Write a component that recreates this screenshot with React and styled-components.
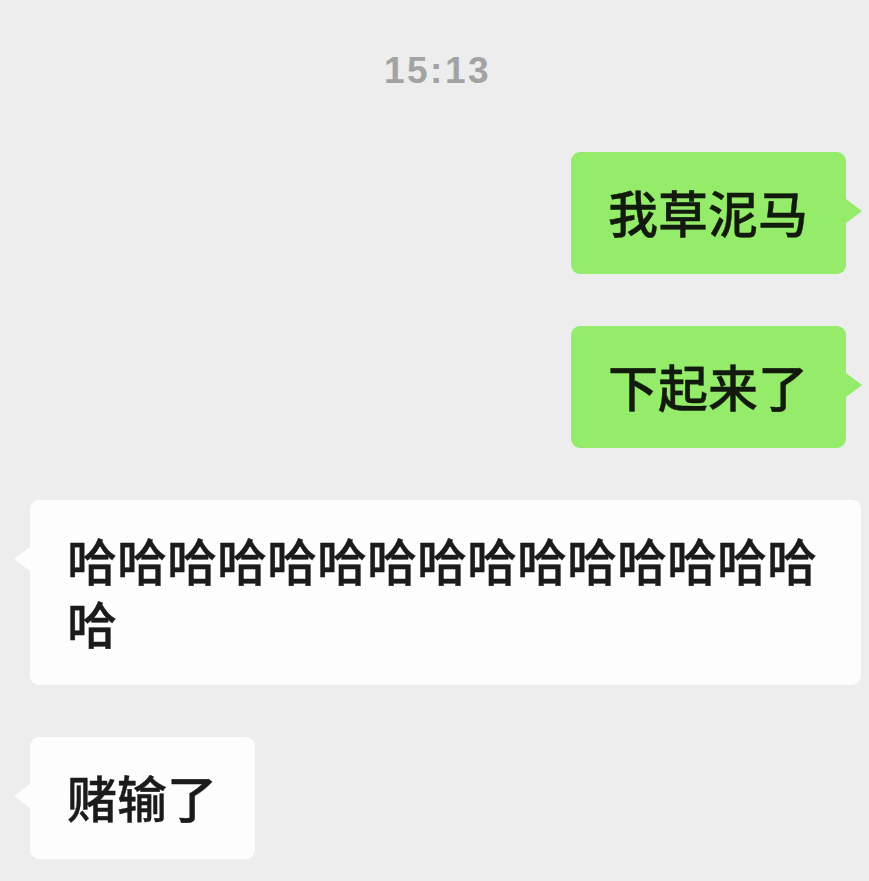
import React from "react";
import styled, { createGlobalStyle, css } from "styled-components";

const Global = createGlobalStyle`
  html, body { margin: 0; padding: 0; background: #ededed; }
  body { font-family: "Noto Sans CJK SC", "Noto Sans", sans-serif; }
`;

const Page = styled.div`
  width: 869px;
  min-height: 881px;
  background: #ededed;
  display: flex;
  flex-direction: column;
  gap: 52px;
  box-sizing: border-box;
  overflow: hidden;
`;

const Time = styled.div`
  margin-top: 51px;
  margin-bottom: 9px;
  height: 40px;
  line-height: 40px;
  text-align: center;
  padding-left: 6px;
  font-family: "Liberation Sans", Arial, sans-serif;
  font-weight: 700;
  font-size: 37px;
  letter-spacing: 2.5px;
  color: #a3a3a3;
`;

const Row = styled.div`
  display: flex;
  justify-content: ${(p) => (p.$side === "right" ? "flex-end" : "flex-start")};
  padding: ${(p) => (p.$side === "right" ? "0 23px 0 30px" : "0 8px 0 30px")};
`;

const Bubble = styled.div`
  position: relative;
  max-width: 100%;
  box-sizing: border-box;
  padding: 28px 38px 31px 37px;
  border-radius: 9px;
  font-size: 50px;
  line-height: 63px;
  font-weight: 500;
  -webkit-text-stroke: 0.4px currentColor;
  word-break: break-all;
  background: ${(p) => (p.$side === "right" ? "#95ec6a" : "#fdfdfd")};
  color: ${(p) => (p.$side === "right" ? "#111a0c" : "#1b1b1b")};

  &::after {
    content: "";
    position: absolute;
    top: 47px;
    width: 0;
    height: 0;
    border-top: 12px solid transparent;
    border-bottom: 12px solid transparent;
    ${(p) =>
      p.$side === "right"
        ? css`
            right: -16px;
            border-left: 16px solid #95ec6a;
          `
        : css`
            left: -16px;
            border-right: 16px solid #fdfdfd;
          `}
  }
`;

const messages = [
  { side: "right", text: "我草泥马" },
  { side: "right", text: "下起来了" },
  { side: "left", text: "哈哈哈哈哈哈哈哈哈哈哈哈哈哈哈哈" },
  { side: "left", text: "赌输了" },
];

export default function App() {
  return (
    <>
      <Global />
      <Page>
        <Time>15:13</Time>
        {messages.map((m, i) => (
          <Row key={i} $side={m.side}>
            <Bubble $side={m.side}>{m.text}</Bubble>
          </Row>
        ))}
      </Page>
    </>
  );
}
